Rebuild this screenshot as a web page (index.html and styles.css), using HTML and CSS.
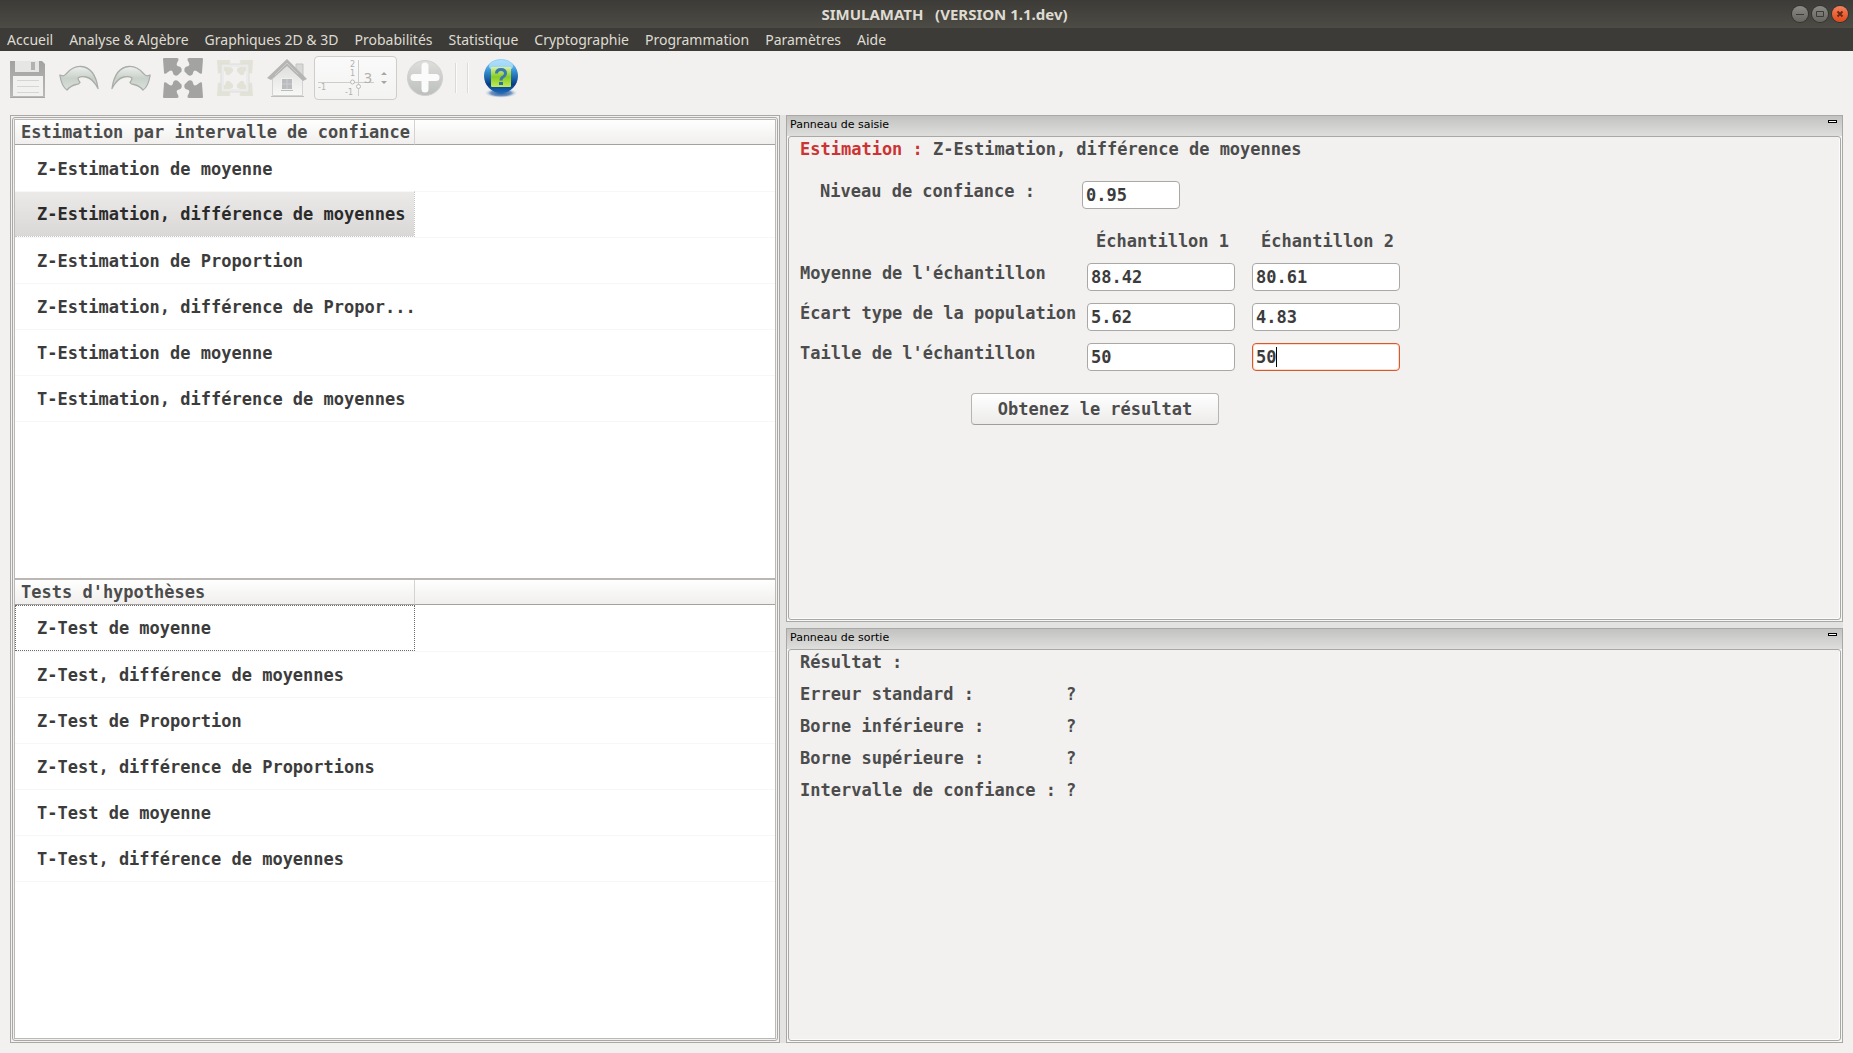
FILE: index.html
```html
<!DOCTYPE html>
<html lang="fr">
<head>
<meta charset="utf-8">
<title>SIMULAMATH (VERSION 1.1.dev)</title>
<link rel="stylesheet" href="styles.css">
</head>
<body>
<header class="titlebar">
  <h1 class="app-title">SIMULAMATH&nbsp;&nbsp; (VERSION 1.1.dev)</h1>
  <div class="window-buttons">
    <button class="win-btn" type="button" aria-label="Réduire"><svg viewBox="0 0 16 16"><path d="M4 8.5h8" /></svg></button>
    <button class="win-btn" type="button" aria-label="Agrandir"><svg viewBox="0 0 16 16"><path d="M4.500 5.500h7v5h-7z" /></svg></button>
    <button class="win-btn win-close" type="button" aria-label="Fermer"><svg viewBox="0 0 16 16"><path d="M5.500 5.500l5 5M10.500 5.500l-5 5" /></svg></button>
  </div>
</header>
<nav class="menubar">
  <a href="#">Accueil</a>
  <a href="#">Analyse &amp; Algèbre</a>
  <a href="#">Graphiques 2D &amp; 3D</a>
  <a href="#">Probabilités</a>
  <a href="#">Statistique</a>
  <a href="#">Cryptographie</a>
  <a href="#">Programmation</a>
  <a href="#">Paramètres</a>
  <a href="#">Aide</a>
</nav>
<div class="toolbar">
  <button class="tool" type="button" aria-label="Enregistrer">
    <svg viewBox="0 0 40 40">
      <defs><linearGradient id="disk" x1="0" y1="0" x2="0" y2="1"><stop offset="0" stop-color="#a2a2a1"/><stop offset="1" stop-color="#b9b9b8"/></linearGradient></defs>
      <path d="M3 3h32l3 3v32q0 2-2 2H5q-2 0-2-2z" fill="url(#disk)"/>
      <rect x="8" y="3" width="24" height="11" fill="#e6e6e5"/>
      <rect x="24" y="4" width="4" height="8" fill="#b2b2b1"/>
      <path d="M6 18h30v20H6z" fill="#f1f1f0"/>
      <path d="M10 22.500h22M10 28.500h22M10 34.500h22" stroke="#d5d5d4"/>
      <path d="M3 39.500h35" stroke="#a6a6a5"/>
    </svg>
  </button>
  <button class="tool" type="button" aria-label="Annuler">
    <svg viewBox="0 0 40 40">
      <defs><linearGradient id="arrow" x1="0" y1="0" x2="0" y2="1"><stop offset="0" stop-color="#eef0ee"/><stop offset=".5" stop-color="#c9d0c9"/><stop offset="1" stop-color="#dbe0db"/></linearGradient></defs>
      <path d="M1 17q4 2 6-1 7-8 15-7.500 14 1 17 22-5-10-12-11.500-5-1-8 1 0 2 2 4.500-1 2-4 2-5 1-9 5.500Q3 29 1 18z" fill="url(#arrow)" stroke="#a9ada9" stroke-width="1.300" stroke-linejoin="round"/>
    </svg>
  </button>
  <button class="tool" type="button" aria-label="Rétablir">
    <svg viewBox="0 0 40 40">
      <path d="M39 17q-4 2-6-1-7-8-15-7.500-14 1-17 22 5-10 12-11.500 5-1 8 1 0 2-2 4.500 1 2 4 2 5 1 9 5.500 5-3 7-14z" fill="url(#arrow)" stroke="#a9ada9" stroke-width="1.300" stroke-linejoin="round"/>
    </svg>
  </button>
  <button class="tool" type="button" aria-label="Plein écran">
    <svg viewBox="0 0 40 40">
      <defs><path id="corner" d="M0 1q0-1 1-1h13q2 0 1.500 2l-1.500 3q-1 2 .5 3l3 1q2 2 1 4.500l-3.500 3.500q-2.500 1.500-4.500-.5l-1-3q-1-1.500-3-.5l-3.500 2.500q-2 1-2-1z"/></defs>
      <g fill="#a3a3a1">
        <use href="#corner"/>
        <use href="#corner" transform="translate(40 0) scale(-1 1)"/>
        <use href="#corner" transform="translate(0 40) scale(1 -1)"/>
        <use href="#corner" transform="translate(40 40) scale(-1 -1)"/>
      </g>
    </svg>
  </button>
  <button class="tool" type="button" aria-label="Ajuster">
    <svg viewBox="0 0 40 40">
      <g fill="#e3e2d7">
        <use href="#corner" transform="translate(2 2) scale(.86)"/>
        <use href="#corner" transform="translate(38 2) scale(-.86 .86)"/>
        <use href="#corner" transform="translate(2 38) scale(.86 -.86)"/>
        <use href="#corner" transform="translate(38 38) scale(-.86 -.86)"/>
      </g>
      <rect x="7.500" y="7.500" width="25" height="25" fill="none" stroke="#ebebeb" stroke-width="3"/>
      <rect x="6" y="6" width="28" height="28" fill="none" stroke="#dddddb"/>
    </svg>
  </button>
  <button class="tool" type="button" aria-label="Accueil">
    <svg viewBox="0 0 40 40">
      <defs><linearGradient id="wall" x1="0" y1="0" x2="0" y2="1"><stop offset="0" stop-color="#dededd"/><stop offset="1" stop-color="#f8f8f7"/></linearGradient></defs>
      <path d="M29 6h7v14l-7-7z" fill="#d8d8d7" stroke="#c3c3c2"/>
      <path d="M5.500 21L20 7l15.500 14v16.500h-30z" fill="url(#wall)" stroke="#d3d3d2"/>
      <path d="M4 38.500h33" stroke="#bebebd"/>
      <path d="M0 20L20 1l20 20-4 2L20 8 4 22z" fill="#b5b5b4"/>
      <path d="M8 17L20 5l11 11" fill="none" stroke="#cbcbca"/>
      <rect x="14.500" y="20.500" width="11" height="11" fill="#b9bbbe" stroke="#f0f0ef"/>
      <path d="M20 21v10M15 26h10" stroke="#cccdcf"/>
      <path d="M14 32.500h12" stroke="#bcbcbb"/>
    </svg>
  </button>
  <div class="grid-spin">
    <svg class="axes" viewBox="0 0 56 36">
      <path d="M0 22.500h56M40.500 0v36" stroke="#cdcdcc"/>
      <circle cx="34.500" cy="22" r="2" fill="#fafafa" stroke="#b9b9b8"/>
      <circle cx="40.500" cy="26.500" r="2" fill="#fafafa" stroke="#b9b9b8"/>
      <text x="32" y="7">2</text><text x="32" y="16">1</text><text x="0" y="30">-1</text><text x="27" y="35">-1</text>
    </svg>
    <input class="spin-value" type="text" value="3" aria-label="Nombre de graduations">
    <svg class="spin-arrows" viewBox="0 0 8 14"><path d="M1 4l3-3 3 3zM1 10l3 3 3-3z" fill="#a5a5a4"/></svg>
  </div>
  <button class="tool" type="button" aria-label="Ajouter">
    <svg viewBox="0 0 40 40">
      <defs><linearGradient id="plus" x1="0" y1="0" x2="0" y2="1"><stop offset="0" stop-color="#dededd"/><stop offset="1" stop-color="#bcbfbb"/></linearGradient></defs>
      <circle cx="20" cy="20" r="17.500" fill="url(#plus)" stroke="#d0d1cf"/>
      <path d="M20 8v23M9 19.500h22" stroke="#fbfbfb" stroke-width="7" stroke-linecap="round"/>
    </svg>
  </button>
  <span class="separator"></span>
  <span class="separator"></span>
  <button class="tool" type="button" aria-label="Aide">
    <svg viewBox="0 0 40 40">
      <defs>
        <linearGradient id="ball" x1="0" y1="0" x2="0" y2="1"><stop offset="0" stop-color="#9bd6fa"/><stop offset=".35" stop-color="#3693d4"/><stop offset=".75" stop-color="#073c86"/><stop offset="1" stop-color="#1a6cbd"/></linearGradient>
        <linearGradient id="lime" x1="0" y1="0" x2="0" y2="1"><stop offset="0" stop-color="#dcf1a0"/><stop offset=".5" stop-color="#86cc22"/><stop offset="1" stop-color="#c5ea5a"/></linearGradient>
        <radialGradient id="shade"><stop offset="0" stop-color="#2e5c9c"/><stop offset=".6" stop-color="#6f94c2"/><stop offset="1" stop-color="#f2f1f0" stop-opacity="0"/></radialGradient>
      </defs>
      <ellipse cx="20" cy="35" rx="17" ry="5" fill="url(#shade)"/>
      <circle cx="20" cy="18" r="17" fill="url(#ball)"/>
      <ellipse cx="20" cy="8" rx="12" ry="6" fill="#b7e4fd" opacity=".75"/>
      <rect x="10" y="9" width="20" height="20" rx="1" fill="url(#lime)"/>
      <path d="M15.500 15.500q0-4 4.500-4t4.500 4q0 2-2.500 3.500-2 1-2 3.500" fill="none" stroke="#3a79ad" stroke-width="3"/>
      <rect x="18" y="24" width="4" height="3" fill="#2e6ea8"/>
    </svg>
  </button>
</div>
<main class="workspace">
  <section class="lists-frame"><div class="lists-inner"><div class="lists">
    <div class="list">
      <table>
        <thead><tr><th class="name-col">Estimation par intervalle de confiance</th><th></th></tr></thead>
        <tbody>
          <tr><td>Z-Estimation de moyenne</td><td></td></tr>
          <tr><td class="selected">Z-Estimation, différence de moyennes</td><td></td></tr>
          <tr><td>Z-Estimation de Proportion</td><td></td></tr>
          <tr><td>Z-Estimation, différence de Propor...</td><td></td></tr>
          <tr><td>T-Estimation de moyenne</td><td></td></tr>
          <tr><td>T-Estimation, différence de moyennes</td><td></td></tr>
        </tbody>
      </table>
    </div>
    <div class="list">
      <table>
        <thead><tr><th class="name-col">Tests d'hypothèses</th><th></th></tr></thead>
        <tbody>
          <tr><td class="focused">Z-Test de moyenne</td><td></td></tr>
          <tr><td>Z-Test, différence de moyennes</td><td></td></tr>
          <tr><td>Z-Test de Proportion</td><td></td></tr>
          <tr><td>Z-Test, différence de Proportions</td><td></td></tr>
          <tr><td>T-Test de moyenne</td><td></td></tr>
          <tr><td>T-Test, différence de moyennes</td><td></td></tr>
        </tbody>
      </table>
    </div>
  </div></div></section>
  <div class="docks">
    <section class="dock dock-input">
      <header class="dock-title"><h2>Panneau de saisie</h2><button class="dock-min" type="button" aria-label="Réduire le panneau de saisie"></button></header>
      <form class="dock-body">
        <p class="form-title"><span class="accent">Estimation :</span> Z-Estimation, différence de moyennes</p>
        <div class="level">
          <label for="level">Niveau de confiance :</label>
          <input class="field" id="level" type="text" value="0.95">
        </div>
        <div class="samples">
          <span></span><span class="sample-name">Échantillon 1</span><span class="sample-name">Échantillon 2</span>
          <label for="mean1">Moyenne de l'échantillon</label>
          <input class="field" id="mean1" type="text" value="88.42">
          <input class="field" type="text" value="80.61" aria-label="Moyenne de l'échantillon 2">
          <label for="dev1">Écart type de la population</label>
          <input class="field" id="dev1" type="text" value="5.62">
          <input class="field" type="text" value="4.83" aria-label="Écart type de la population 2">
          <label for="size1">Taille de l'échantillon</label>
          <input class="field" id="size1" type="text" value="50">
          <div class="active-field">
            <input class="field field-active" type="text" value="50" aria-label="Taille de l'échantillon 2">
            <span class="caret"></span>
          </div>
        </div>
        <button class="submit" type="button">Obtenez le résultat</button>
      </form>
    </section>
    <section class="dock dock-output">
      <header class="dock-title"><h2>Panneau de sortie</h2><button class="dock-min" type="button" aria-label="Réduire le panneau de sortie"></button></header>
      <div class="dock-body">
        <table class="results">
          <caption>Résultat :</caption>
          <tbody>
            <tr><th>Erreur standard :</th><td>?</td></tr>
            <tr><th>Borne inférieure :</th><td>?</td></tr>
            <tr><th>Borne supérieure :</th><td>?</td></tr>
            <tr><th>Intervalle de confiance :</th><td>?</td></tr>
          </tbody>
        </table>
      </div>
    </section>
  </div>
</main>
</body>
</html>
```
FILE: styles.css
```css
* { box-sizing: border-box; }

body {
  margin: 0;
  min-height: 100vh;
  display: flex;
  flex-direction: column;
  background: #f2f1f0;
  color: #4c4c4c;
  font: bold 17px/20px "DejaVu Sans Mono", monospace;
}

button, input { font: inherit; color: inherit; margin: 0; }
button { padding: 0; border: 0; background: none; }
h1, h2, p { margin: 0; }
svg { display: block; }

/* Title bar and menus */
.titlebar {
  display: flex;
  align-items: center;
  height: 28px;
  padding: 0 5px 0 97px;
  background: linear-gradient(#3c3b37, #4c4b44);
}
.app-title {
  flex: 1;
  text-align: center;
  color: #dfdbd2;
  font: bold 15px/20px "Noto Sans", sans-serif;
}
.window-buttons { display: flex; gap: 4px; }
.win-btn {
  width: 16px;
  height: 16px;
  border-radius: 8px;
  background: linear-gradient(#8b8a84, #66655f);
  box-shadow: 0 0 0 1px #35342f;
}
.win-btn svg { width: 16px; height: 16px; fill: none; stroke: #3c3b37; }
.win-close { background: linear-gradient(#f4825e, #e0481a); }
.win-close svg { stroke-width: 2; stroke: #6b2a10; }

.menubar {
  display: flex;
  gap: 16px;
  height: 23px;
  padding: 0 7px;
  background: #3c3b37;
  font: 14px/23px "Noto Sans", sans-serif;
}
.menubar a { color: #dfdbd2; text-decoration: none; white-space: nowrap; }

/* Toolbar */
.toolbar {
  display: flex;
  align-items: center;
  height: 54px;
  padding: 0 1px;
}
.tool { width: 52px; height: 40px; display: grid; place-items: center; }
.tool svg { width: 40px; height: 40px; }
.grid-spin {
  display: flex;
  align-items: center;
  width: 83px;
  height: 44px;
  margin: 0 2px 0 1px;
  padding: 0 8px 0 3px;
  border: 1px solid #cfcdca;
  border-radius: 4px;
  background: linear-gradient(#fafafa, #f3f3f2);
}
.axes { width: 56px; height: 36px; flex: none; }
.axes text { font: 8px "DejaVu Sans", sans-serif; fill: #b0b0af; }
.spin-value {
  width: 12px;
  margin-left: -10px;
  padding: 0;
  border: 0;
  background: none;
  color: #b5aea9;
  font: 14px/20px "Noto Sans", sans-serif;
}
.spin-arrows { width: 8px; height: 14px; margin-left: auto; }
.separator {
  width: 2px;
  height: 30px;
  margin: 0 6px 0 4px;
  background: linear-gradient(90deg, #dcdad8 50%, #fbfbfa 50%);
}

/* Work area */
.workspace {
  flex: 1;
  display: grid;
  grid-template-columns: 770fr 1057fr;
  gap: 6px;
  margin: 10px;
  background: #e3e3e1;
}
.lists-frame, .lists-inner { display: flex; padding: 1px; border: 1px solid #a9a8a5; background: #f2f1f0; }
.lists-inner { flex: 1; border-radius: 3px; }
.lists {
  flex: 1;
  display: flex;
  flex-direction: column;
  border: 1px solid #bbb9b5;
  background: #fff;
}
.list { flex: 1; border: 0 solid #bcb7b3; }
.list:first-child { border-bottom-width: 1px; }
.list:last-child { border-top-width: 1px; }
.list table { width: 100%; table-layout: fixed; border-collapse: separate; border-spacing: 0; color: #3c3c3c; }
.list th {
  height: 25px;
  padding: 0 6px;
  border-bottom: 1px solid #a5a29e;
  background: linear-gradient(#fff, #f0efed);
  color: #4c4c4c;
  text-align: left;
  white-space: nowrap;
}
.list .name-col { width: 400px; border-right: 1px solid #d5d3d0; }
.list td {
  height: 46px;
  padding: 0 0 0 22px;
  border-top: 1px solid #f7f7f7;
  white-space: nowrap;
}
.list tr:first-child td { border-top-color: #fff; }
.list tr:last-child td { height: 47px; border-bottom: 1px solid #f7f7f7; }
.list .selected {
  color: #2b2b2b;
  border-right: 1px dotted #c9c7c4;
  border-bottom: 1px dotted #c9c7c4;
  background: linear-gradient(#ebeae9, #dad8d6) padding-box;
}
.list tr:first-child .focused { padding-left: 21px; border: 1px dotted #6a6a6a; }

.docks { display: flex; flex-direction: column; gap: 6px; }
.dock {
  display: flex;
  flex-direction: column;
  padding: 0 1px 1px;
  border: 1px solid #a9a8a5;
  background: #f7f7f6;
}
.dock-input { flex: 507 0 0; }
.dock-output { flex: 415 0 0; }
.dock-title {
  display: flex;
  justify-content: space-between;
  height: 20px;
  margin: 0 -1px;
  padding: 0 5px 0 3px;
  background: linear-gradient(#c2c2c0, #dededc);
}
.dock-title h2 { color: #000; font: 11px/18px "DejaVu Sans", sans-serif; }
.dock-min { width: 9px; height: 3px; margin-top: 4px; border: 1px solid #000; background: #fff; }
.dock-body {
  flex: 1;
  padding: 2px 11px;
  border: 1px solid #a9a8a5;
  border-radius: 3px;
  background: #f2f1f0;
  box-shadow: inset -1px -1px #fcfcfc;
}

/* Input form */
.accent { color: #cc3333; }
.level { display: flex; margin-top: 22px; padding-left: 20px; }
.level label { width: 262px; }
.level .field { width: 98px; }
.field {
  width: 100%;
  height: 28px;
  padding: 0 3px;
  border: 1px solid #aaa8a5;
  border-radius: 4px;
  background: #fff;
  color: #3c3c3c;
}
.samples {
  display: grid;
  grid-template-columns: 270px 148px 148px;
  gap: 12px 17px;
  margin-top: 22px;
  white-space: nowrap;
}
.sample-name { padding-left: 9px; }
.active-field { position: relative; }
.field-active { border-color: #d8592e; box-shadow: inset 0 0 0 1px #fbdccf; }
.caret { position: absolute; left: 24px; top: 4px; width: 1px; height: 20px; background: #000; }
.submit {
  display: block;
  width: 248px;
  height: 32px;
  margin: 22px 0 0 171px;
  border: 1px solid #b7b5b2;
  border-bottom-color: #a09e9b;
  border-radius: 4px;
  background: linear-gradient(#fff, #ecebea);
}

/* Results */
.results { border-spacing: 0; }
.results caption { text-align: left; padding-bottom: 6px; }
.results th, .results td { height: 32px; padding: 0; text-align: left; white-space: nowrap; }
.results th { width: 266px; }
```
